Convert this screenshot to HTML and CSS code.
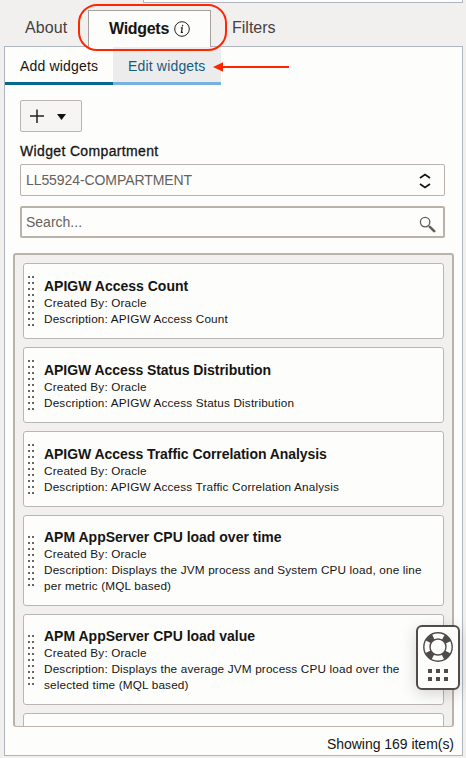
FILE: index.html
```html
<!DOCTYPE html>
<html lang="en">
<head>
<meta charset="utf-8">
<title>Widgets</title>
<link rel="stylesheet" href="styles.css">
</head>
<body>
<div class="top-panel"></div>
<nav class="tabs">
  <span class="tab about">About</span>
  <span class="tab active"><span class="tab-name">Widgets</span>
    <svg class="info" width="16" height="16" viewBox="0 0 16 16"><circle cx="8" cy="8" r="7.3" fill="none" stroke="#222" stroke-width="1"/><path d="M8.7 3.9L8.4 5.3M6.8 6.9h1.4L7.4 11.4h1.5" fill="none" stroke="#222" stroke-width="1.2"/></svg>
    <span class="callout"></span>
  </span>
  <span class="tab filters">Filters</span>
</nav>
<main class="panel">
  <div class="subtabs">
    <span class="subtab current">Add widgets</span>
    <span class="subtab edit">Edit widgets
      <svg class="arrow" width="76" height="12" viewBox="0 0 76 12"><path d="M8 6H76" stroke="#ff2600" stroke-width="2"/><path d="M0 6L10 1.2V10.8Z" fill="#ff2600"/></svg>
    </span>
  </div>
  <div class="controls">
    <button class="add"><svg width="60" height="30" viewBox="0 0 60 30"><path d="M9 15H23M16 8.5V22" stroke="#222" stroke-width="1.5" fill="none"/><path d="M36 13H45L40.5 19Z" fill="#111"/></svg></button>
    <div class="label">Widget Compartment</div>
    <div class="field select"><span>LL55924-COMPARTMENT</span>
      <svg width="12" height="18" viewBox="0 0 12 18"><path d="M1 6L6 2.5L11 6M1 12L6 15.5L11 12" fill="none" stroke="#161513" stroke-width="1.7"/></svg>
    </div>
    <div class="field search"><span>Search...</span>
      <svg width="17" height="17" viewBox="0 0 17 17"><circle cx="6.1" cy="6.1" r="4.7" fill="none" stroke="#655f5c" stroke-width="1.3"/><path d="M9.5 9.5L11.5 11.5" stroke="#655f5c" stroke-width="1"/><path d="M10.8 10.8L15.2 15.2" stroke="#655f5c" stroke-width="2.6" stroke-linecap="round"/></svg>
    </div>
  </div>
  <div class="list">
    <article class="card"><i class="grip"></i><div><h3>APIGW Access Count</h3><p>Created By: Oracle</p><p>Description: APIGW Access Count</p></div></article>
    <article class="card"><i class="grip"></i><div><h3 class="tight">APIGW Access Status Distribution</h3><p>Created By: Oracle</p><p>Description: APIGW Access Status Distribution</p></div></article>
    <article class="card"><i class="grip"></i><div><h3 class="tight">APIGW Access Traffic Correlation Analysis</h3><p>Created By: Oracle</p><p>Description: APIGW Access Traffic Correlation Analysis</p></div></article>
    <article class="card tall"><i class="grip"></i><div><h3>APM AppServer CPU load over time</h3><p>Created By: Oracle</p><p>Description: Displays the JVM process and System CPU load, one line<br>per metric (MQL based)</p></div></article>
    <article class="card tall"><i class="grip"></i><div><h3>APM AppServer CPU load value</h3><p>Created By: Oracle</p><p>Description: Displays the average JVM process CPU load over the<br>selected time (MQL based)</p></div></article>
    <article class="card"></article>
  </div>
  <div class="count">Showing 169 item(s)</div>
</main>
<aside class="help">
  <svg width="40" height="61" viewBox="0 0 40 61">
    <circle cx="20" cy="20" r="11" fill="none" stroke="#504b49" stroke-width="6.5" stroke-dasharray="7 10.279" stroke-dashoffset="-5.14"/>
    <circle cx="20" cy="20" r="14.2" fill="none" stroke="#504b49" stroke-width="1.4"/>
    <circle cx="20" cy="20" r="8" fill="none" stroke="#504b49" stroke-width="1.4"/>
    <path d="M10 42h4v4h-4zM18 42h4v4h-4zM26 42h4v4h-4zM10 50h4v4h-4zM18 50h4v4h-4zM26 50h4v4h-4z" fill="#504b49"/>
  </svg>
</aside>
</body>
</html>
```
FILE: styles.css
```css
* { box-sizing: border-box; }
body {
  margin: 0;
  width: 466px;
  height: 758px;
  overflow: hidden;
  background: #f2f0ef;
  color: #161513;
  font-family: "Liberation Sans", Arial, sans-serif;
}
.top-panel {
  height: 3px;
  margin: 0 3px 0 143px;
  background: #fdfdfc;
  border: 1px solid #afb6c0;
  border-top: 0;
}
.tabs { display: flex; height: 43px; padding-top: 7px; }
.tab { font-size: 16px; line-height: 35px; color: #45413f; white-space: nowrap; }
.about { width: 88px; padding-left: 25px; letter-spacing: .1px; }
.active {
  position: relative;
  z-index: 1;
  display: flex;
  align-items: center;
  gap: 5px;
  width: 123px;
  height: 37px;
  padding: 0 0 1px 20px;
  background: #fdfdfc;
  border: 1px solid #a3a09e;
  border-bottom: 0;
  color: #161513;
  font-weight: bold;
}
.tab-name { width: 60px; letter-spacing: -.3px; }
.info { flex: none; }
.callout {
  position: absolute;
  left: -11px;
  top: -7px;
  width: 149px;
  height: 47px;
  border: 2px solid #ff2600;
  border-radius: 19px;
}
.filters { padding-left: 21px; }
.panel {
  width: 459px;
  height: 710px;
  margin-left: 4px;
  background: #fdfdfc;
  border: 1px solid #afb6c0;
}
.subtabs { display: flex; height: 38px; }
.subtab {
  position: relative;
  width: 108px;
  padding-left: 15px;
  border-bottom: 3px solid #006b8f;
  font-size: 14px;
  line-height: 38px;
  letter-spacing: .17px;
  white-space: nowrap;
}
.edit { background: #ececec; border-color: #75b2dd; color: #185c7c; }
.arrow { position: absolute; left: 100px; top: 14px; }
.controls { padding: 15px 17px 0 15px; }
.add {
  display: block;
  width: 62px;
  height: 32px;
  padding: 0;
  border: 1px solid #bbb4b0;
  border-radius: 2px;
  background: #f6f5f4;
}
.add svg { display: block; }
.label {
  height: 32px;
  padding-top: 3px;
  font-size: 14px;
  line-height: 32px;
  letter-spacing: .35px;
  -webkit-text-stroke: .3px #161513;
}
.field {
  display: flex;
  align-items: center;
  justify-content: space-between;
  width: 425px;
  height: 32px;
  padding: 0 13px 0 5px;
  border: 1px solid #b9b2ac;
  border-radius: 2px;
  color: #67615d;
  font-size: 14px;
}
.select { letter-spacing: -.08px; }
.select span { margin-top: -1px; }
.select svg { margin-top: 2px; }
.search { margin-top: 10px; padding: 0 7px 0 4px; border: 2px solid #bab3aa; }
.search svg { margin-top: 4px; }
.list {
  display: flex;
  flex-direction: column;
  gap: 8px;
  width: 441px;
  height: 474px;
  margin: 15px 0 0 8px;
  padding: 8px 8px 0;
  overflow: hidden;
  background: #f2f0ef;
  border: 2px solid #bab3aa;
  border-bottom-width: 1px;
  border-radius: 3px;
}
.card {
  display: flex;
  align-items: center;
  flex: none;
  height: 76px;
  padding-left: 4px;
  border: 1px solid #bab6b2;
  border-radius: 3px;
  background: #fdfdfc;
}
.tall { height: 91px; }
.grip {
  width: 6px;
  height: 50px;
  margin-right: 10px;
  background:
    repeating-linear-gradient(to bottom, transparent 0 2px, #fdfdfc 2px 6px),
    linear-gradient(to right, #696563 2px, transparent 2px 4px, #696563 4px 6px);
}
.card div { padding-top: 2px; }
.card h3 { margin: 0 0 1px; font-size: 14px; line-height: 16px; white-space: nowrap; }
.card h3.tight { letter-spacing: -.06px; }
.card p { margin: 0; font-size: 11.75px; line-height: 16px; letter-spacing: .16px; white-space: nowrap; }
.count { padding-right: 8px; text-align: right; font-size: 14px; line-height: 35px; letter-spacing: -.03px; }
.help {
  position: absolute;
  left: 416px;
  top: 625px;
  width: 44px;
  height: 65px;
  border: 2px solid #504b49;
  border-radius: 6px;
  background: #fdfdfc;
  box-shadow: 0 4px 16px rgba(0, 0, 0, .16);
}
.help svg { display: block; }
```
